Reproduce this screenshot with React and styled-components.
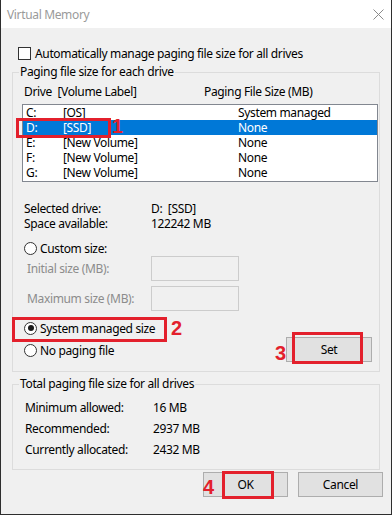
import React from 'react';
import styled, { createGlobalStyle } from 'styled-components';

const Global = createGlobalStyle`
  html, body { margin: 0; padding: 0; background: #ffffff; }
  body { font-family: "Noto Sans", "Open Sans", sans-serif; font-size: 12px; letter-spacing: -0.35px; color: #000; }
  * { box-sizing: border-box; }
`;

const Window = styled.div`
  position: relative;
  width: 392px;
  height: 515px;
  border: 1px solid #2e2e2e;
  border-top: none;
  background: #f0f0f0;
  display: flex;
  flex-direction: column;
`;

const TitleBar = styled.div`
  height: 28px;
  background: #ffffff;
  display: flex;
  align-items: center;
  justify-content: space-between;
  padding: 0 7px 0 6px;
  color: #9a9a9a;
  font-size: 12px;
`;

const Body = styled.div`
  flex: 1;
  display: flex;
  flex-direction: column;
  padding: 0 11px;
`;

const CheckRow = styled.label`
  display: flex;
  align-items: center;
  gap: 4px;
  margin: 19px 0 0 6px;
  height: 13px;
  line-height: 13px;
`;

const CheckBox = styled.span`
  width: 13px;
  height: 13px;
  border: 1px solid #333;
  background: #fff;
  flex: none;
`;

const Group = styled.div`
  position: relative;
  margin-top: 12px;
  height: ${p => p.$h}px;
  border: 1px solid #dcdcdc;
  display: flex;
  flex-direction: column;
`;

const GroupTitle = styled.span`
  position: absolute;
  left: 6px;
  top: -9px;
  padding: 0 1px;
  line-height: 16px;
  background: #f0f0f0;
`;

const HeaderRow = styled.div`
  display: flex;
  margin: 11px 0 0 11px;
  line-height: 15px;
`;

const Col = styled.span`
  width: ${p => (p.$w ? `${p.$w}px` : 'auto')};
  flex: none;
  white-space: pre;
`;

const ListBox = styled.div`
  position: relative;
  margin: 5px 0 0 9px;
  width: 356px;
  height: 78px;
  border: 1px solid #828790;
  background: #fff;
`;

const ListRow = styled.div`
  display: flex;
  height: 15px;
  line-height: 15px;
  padding-left: 3px;
  background: ${p => (p.$sel ? '#0078d7' : 'transparent')};
  color: ${p => (p.$sel ? '#fff' : '#000')};
`;

const InfoBlock = styled.div`
  margin: ${p => p.$mt}px 0 0 ${p => p.$ml}px;
  display: flex;
  flex-direction: column;
`;

const InfoRow = styled.div`
  display: flex;
  line-height: ${p => p.$lh}px;
  height: ${p => p.$lh}px;
`;

const RadioRow = styled.div`
  display: flex;
  align-items: center;
  gap: 3px;
  height: ${p => p.$h || 16}px;
  margin-top: ${p => p.$mt || 0}px;
`;

const Radio = styled.span`
  position: relative;
  width: 13px;
  height: 13px;
  border-radius: 50%;
  border: 1px solid #333;
  background: #fff;
  flex: none;
  &::after {
    content: '';
    display: ${p => (p.$on ? 'block' : 'none')};
    position: absolute;
    left: 2.5px;
    top: 2.5px;
    width: 6px;
    height: 6px;
    border-radius: 50%;
    background: #1a1a1a;
  }
`;

const SizeRows = styled.div`
  display: flex;
  flex-direction: column;
  gap: 5px;
  margin-left: 3px;
`;

const SizeRow = styled.div`
  display: flex;
  align-items: center;
  height: 25px;
  color: #8c8c8c;
`;

const SizeInput = styled.div`
  width: 88px;
  height: 25px;
  border: 1px solid #cccccc;
  background: #f0f0f0;
`;

const OptionsRow = styled.div`
  display: flex;
  justify-content: space-between;
  margin: 9px 7px 0 11px;
`;

const RadioCol = styled.div`
  display: flex;
  flex-direction: column;
  gap: 6px;
`;

const Button = styled.button`
  width: ${p => p.$w || 85}px;
  height: 25px;
  margin-top: ${p => p.$mt || 0}px;
  border: 1px solid #adadad;
  background: #e1e1e1;
  font: inherit;
  letter-spacing: inherit;
  color: #000;
  padding: 0;
`;

const Totals = styled.div`
  display: flex;
  flex-direction: column;
  margin: 12px 0 0 12px;
`;

const ButtonBar = styled.div`
  display: flex;
  justify-content: flex-end;
  gap: 10px;
  margin: 2px -3px 0 0;
`;

const Mark = styled.div`
  position: absolute;
  left: ${p => p.$x}px;
  top: ${p => p.$y}px;
  width: ${p => p.$w}px;
  height: ${p => p.$h}px;
  border: 3px solid #e3202c;
  pointer-events: none;
`;

const Num = styled.span`
  position: absolute;
  left: ${p => p.$x}px;
  top: ${p => p.$y}px;
  font-family: "Liberation Sans", Arial, sans-serif;
  font-weight: bold;
  font-size: 20px;
  line-height: 15px;
  letter-spacing: 0;
  color: #e3202c;
`;

const drives = [
  ['C:', '[OS]', 'System managed'],
  ['D:', '[SSD]', 'None'],
  ['E:', '[New Volume]', 'None'],
  ['F:', '[New Volume]', 'None'],
  ['G:', '[New Volume]', 'None'],
];

export default function App() {
  return (
    <>
      <Global />
      <Window>
        <TitleBar>
          <span>Virtual Memory</span>
          <svg width="11" height="11" viewBox="0 0 11 11">
            <path d="M0.5 0.5 L10.5 10.5 M10.5 0.5 L0.5 10.5" stroke="#8a8a8a" strokeWidth="1" />
          </svg>
        </TitleBar>
        <Body>
          <CheckRow>
            <CheckBox />
            <span>Automatically manage paging file size for all drives</span>
          </CheckRow>

          <Group $h={300}>
            <GroupTitle>Paging file size for each drive</GroupTitle>
            <HeaderRow>
              <Col $w={180}>Drive  [Volume Label]</Col>
              <Col $w={150}>Paging File Size (MB)</Col>
            </HeaderRow>
            <ListBox>
              {drives.map((d, i) => (
                <ListRow key={d[0]} $sel={i === 1}>
                  <Col $w={37}>{d[0]}</Col>
                  <Col $w={175}>{d[1]}</Col>
                  <Col $w={130}>{d[2]}</Col>
                </ListRow>
              ))}
            </ListBox>

            <InfoBlock $mt={19} $ml={11}>
              <InfoRow $lh={15}>
                <Col $w={127}>Selected drive:</Col>
                <Col>D:  [SSD]</Col>
              </InfoRow>
              <InfoRow $lh={15}>
                <Col $w={127}>Space available:</Col>
                <Col>122242 MB</Col>
              </InfoRow>
              <RadioRow $mt={10} $h={15}>
                <Radio />
                <span>Custom size:</span>
              </RadioRow>
              <SizeRows>
                <SizeRow>
                  <Col $w={124}>Initial size (MB):</Col>
                  <SizeInput />
                </SizeRow>
                <SizeRow>
                  <Col $w={124}>Maximum size (MB):</Col>
                  <SizeInput />
                </SizeRow>
              </SizeRows>
            </InfoBlock>

            <OptionsRow>
              <RadioCol>
                <RadioRow>
                  <Radio $on />
                  <span>System managed size</span>
                </RadioRow>
                <RadioRow>
                  <Radio />
                  <span>No paging file</span>
                </RadioRow>
              </RadioCol>
              <Button $w={86} $mt={17}>Set</Button>
            </OptionsRow>
          </Group>

          <Group $h={86}>
            <GroupTitle>Total paging file size for all drives</GroupTitle>
            <Totals>
              <InfoRow $lh={21}>
                <Col $w={128}>Minimum allowed:</Col>
                <Col>16 MB</Col>
              </InfoRow>
              <InfoRow $lh={21}>
                <Col $w={128}>Recommended:</Col>
                <Col>2937 MB</Col>
              </InfoRow>
              <InfoRow $lh={21}>
                <Col $w={128}>Currently allocated:</Col>
                <Col>2432 MB</Col>
              </InfoRow>
            </Totals>
          </Group>

          <ButtonBar>
            <Button>OK</Button>
            <Button>Cancel</Button>
          </ButtonBar>
        </Body>

        <Mark $x={15} $y={118} $w={95} $h={20} />
        <Num $x={111} $y={119}>1</Num>
        <Mark $x={11} $y={317} $w={155} $h={25} />
        <Num $x={170} $y={321}>2</Num>
        <Mark $x={291} $y={332} $w={71} $h={32} />
        <Num $x={274} $y={346}>3</Num>
        <Mark $x={221} $y={471} $w={52} $h={28} />
        <Num $x={202} $y={480}>4</Num>
      </Window>
    </>
  );
}
